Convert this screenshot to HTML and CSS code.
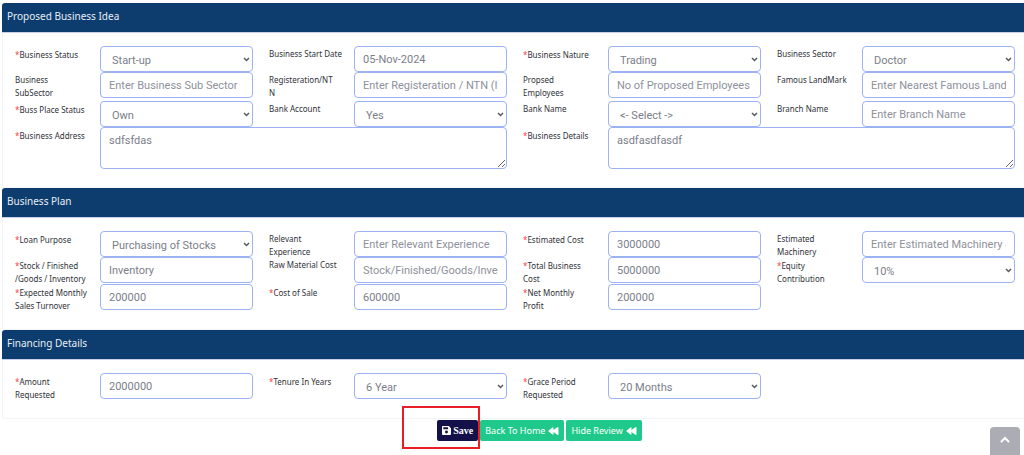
FILE: index.html
```html
<!DOCTYPE html>
<html lang="en">
<head>
<meta charset="utf-8">
<meta name="viewport" content="width=device-width, initial-scale=1">
<title>Business Loan Application</title>
<link rel="stylesheet" href="styles.css">
</head>
<body>
<form class="page">
  <section class="card">
    <h2 class="card-title">Proposed Business Idea</h2>
    <div class="fields">
      <div class="field"><label class="required" for="status">Business Status</label><select id="status"><option>Start-up</option></select></div>
      <div class="field"><label for="start">Business Start Date</label><input id="start" type="text" value="05-Nov-2024"></div>
      <div class="field"><label class="required" for="nature">Business Nature</label><select id="nature"><option>Trading</option></select></div>
      <div class="field"><label for="sector">Business Sector</label><select id="sector"><option>Doctor</option></select></div>

      <div class="field"><label for="subsector">Business<br>SubSector</label><input id="subsector" type="text" placeholder="Enter Business Sub Sector"></div>
      <div class="field"><label for="ntn">Registeration/NT<br>N</label><input id="ntn" type="text" placeholder="Enter Registeration / NTN (If Any)"></div>
      <div class="field"><label for="employees">Propsed<br>Employees</label><input id="employees" type="text" placeholder="No of Proposed Employees"></div>
      <div class="field"><label for="landmark">Famous LandMark</label><input id="landmark" type="text" placeholder="Enter Nearest Famous LandMark"></div>

      <div class="field spaced"><label class="required" for="place">Buss Place Status</label><select id="place"><option>Own</option></select></div>
      <div class="field spaced"><label for="account">Bank Account</label><select id="account"><option>Yes</option></select></div>
      <div class="field spaced"><label for="bank">Bank Name</label><select id="bank"><option>&lt;- Select -&gt;</option></select></div>
      <div class="field spaced"><label for="branch">Branch Name</label><input id="branch" type="text" placeholder="Enter Branch Name"></div>

      <div class="field wide"><label class="required" for="address">Business Address</label><textarea id="address">sdfsfdas</textarea></div>
      <div class="field wide"><label class="required" for="details">Business Details</label><textarea id="details">asdfasdfasdf</textarea></div>
    </div>
  </section>

  <section class="card">
    <h2 class="card-title">Business Plan</h2>
    <div class="fields">
      <div class="field"><label class="required" for="purpose">Loan Purpose</label><select id="purpose"><option>Purchasing of Stocks</option></select></div>
      <div class="field"><label for="experience">Relevant<br>Experience</label><input id="experience" type="text" placeholder="Enter Relevant Experience"></div>
      <div class="field"><label class="required" for="cost">Estimated Cost</label><input id="cost" type="text" value="3000000"></div>
      <div class="field"><label for="machinery">Estimated<br>Machinery</label><input id="machinery" type="text" placeholder="Enter Estimated Machinery &amp; Equipment"></div>

      <div class="field"><label class="required" for="stock">Stock / Finished<br>/Goods / Inventory</label><input id="stock" type="text" value="Inventory"></div>
      <div class="field"><label for="material">Raw Material Cost</label><input id="material" type="text" placeholder="Stock/Finished/Goods/Inventory"></div>
      <div class="field"><label class="required" for="total">Total Business<br>Cost</label><input id="total" type="text" value="5000000"></div>
      <div class="field"><label class="required" for="equity">Equity<br>Contribution</label><select id="equity"><option>10%</option></select></div>

      <div class="field"><label class="required" for="turnover">Expected Monthly<br>Sales Turnover</label><input id="turnover" type="text" value="200000"></div>
      <div class="field"><label class="required" for="sale">Cost of Sale</label><input id="sale" type="text" value="600000"></div>
      <div class="field"><label class="required" for="profit">Net Monthly<br>Profit</label><input id="profit" type="text" value="200000"></div>
    </div>
  </section>

  <section class="card">
    <h2 class="card-title">Financing Details</h2>
    <div class="fields">
      <div class="field"><label class="required" for="amount">Amount<br>Requested</label><input id="amount" type="text" value="2000000"></div>
      <div class="field"><label class="required" for="tenure">Tenure In Years</label><select id="tenure"><option>6 Year</option></select></div>
      <div class="field"><label class="required" for="grace">Grace Period<br>Requested</label><select id="grace"><option>20 Months</option></select></div>
    </div>
  </section>

  <div class="actions">
    <span class="highlight">
      <button class="btn btn-save" type="submit">
        <svg class="icon-save" viewBox="0 0 448 448" aria-hidden="true"><path fill-rule="evenodd" d="M48 0h270c13 0 25 5 34 14l82 82c9 9 14 21 14 34v270c0 26-22 48-48 48H48c-26 0-48-22-48-48V48C0 22 22 0 48 0zM64 64v96h240V64zM224 224a72 72 0 1 0 0 144 72 72 0 0 0 0-144z"/></svg>
        Save
      </button>
    </span>
    <button class="btn" type="button">Back To Home <svg class="icon-back" viewBox="0 0 22 16" aria-hidden="true"><path d="M0 8 9 1q2-1 2 1v4l7-5q3-2 3 1v12q0 3-3 1l-7-5v4q0 2-2 1z"/></svg></button>
    <button class="btn" type="button">Hide Review <svg class="icon-back" viewBox="0 0 22 16" aria-hidden="true"><path d="M0 8 9 1q2-1 2 1v4l7-5q3-2 3 1v12q0 3-3 1l-7-5v4q0 2-2 1z"/></svg></button>
  </div>
</form>
<button class="to-top" type="button" aria-label="Scroll to top"><svg viewBox="0 0 10 7" aria-hidden="true"><path d="M1.500 5.500 5 2l3.500 3.500"/></svg></button>
</body>
</html>
```
FILE: styles.css
```css
* {
  box-sizing: border-box;
}

body {
  min-height: 100vh;
  margin: 0;
  background: #fff;
  color: #2f3238;
  font-family: "Noto Sans", "Open Sans", sans-serif;
}

.page {
  padding: 3px 0 0 2px;
}

.card {
  border-left: 1px solid #f3f4f8;
  border-bottom: 1px solid #f3f4f8;
  border-radius: 3px 0 0 3px;
}

.card-title {
  height: 30px;
  margin: 0 0 0 -1px;
  padding: 5px 5px;
  border-bottom: 1px solid #c9cfe6;
  border-radius: 3px 0 0 0;
  background: #0d3c6e;
  color: #e8eef5;
  font-size: 10px;
  font-weight: 400;
  line-height: 16px;
}

.fields {
  display: grid;
  grid-template-columns: repeat(4, minmax(0, 1fr));
  column-gap: 16px;
  padding: 13px 9px 18px 12px;
}

.field {
  display: grid;
  grid-template-columns: 85px minmax(0, 1fr);
  align-items: start;
}

.wide {
  grid-column: span 2;
}

.spaced {
  padding-top: 3px;
}

label {
  margin-bottom: -1px;
  padding: 1px 8px 0 0;
  font-size: 8px;
  line-height: 13px;
}

.required {
  padding-top: 2px;
}

.required::before {
  content: "*";
  color: #f04a4a;
}

input,
select,
textarea {
  display: block;
  width: 100%;
  height: 26px;
  margin: 0;
  padding: 3px 8px 0;
  border: 1px solid #9db2f3;
  border-radius: 4px;
  background-color: #fff;
  color: #7b7e89;
  font: 11px/18px Roboto, "Open Sans", sans-serif;
}

input {
  padding: 1px 8px 0;
}

input::placeholder {
  color: #8e919b;
  opacity: 1;
}

select {
  padding-left: 11px;
  appearance: none;
  background-image: url("data:image/svg+xml,%3Csvg xmlns='http://www.w3.org/2000/svg' width='7' height='5' viewBox='0 0 7 5'%3E%3Cpath d='M1 1 3.500 3.500 6 1' fill='none' stroke='%2355585f' stroke-width='1.500'/%3E%3C/svg%3E");
  background-position: right 2px center;
  background-repeat: no-repeat;
}

textarea {
  height: 42px;
  padding-top: 4px;
  resize: vertical;
}

.actions {
  display: flex;
  justify-content: center;
  gap: 2px;
  padding: 1px 0 8px 53px;
}

.highlight {
  position: relative;
  display: flex;
}

.highlight::after {
  content: "";
  position: absolute;
  inset: -14px -2px -8px -35px;
  border: 2px solid #ea1f25;
  pointer-events: none;
}

.btn {
  display: flex;
  align-items: center;
  gap: 3px;
  height: 21px;
  padding: 0 5px;
  border: 0;
  border-radius: 2px;
  background: #1fc98b;
  color: #fff;
  font: 9px/16px "Noto Sans", "Open Sans", sans-serif;
  white-space: nowrap;
}

.btn-save {
  gap: 2px;
  background: #14104a;
  font: bold 10px/16px "Liberation Serif", serif;
}

.btn svg {
  fill: currentColor;
}

.icon-save {
  width: 9px;
  height: 9px;
}

.icon-back {
  width: 11px;
  height: 8px;
}

.to-top {
  position: fixed;
  right: 4px;
  bottom: 0;
  display: flex;
  justify-content: center;
  width: 30px;
  height: 28px;
  padding: 9px 0 0;
  border: 0;
  border-radius: 4px 4px 0 0;
  background: #acacb5;
}

.to-top svg {
  width: 10px;
  height: 7px;
  fill: none;
  stroke: #fff;
  stroke-width: 2;
  stroke-linecap: round;
}
```
